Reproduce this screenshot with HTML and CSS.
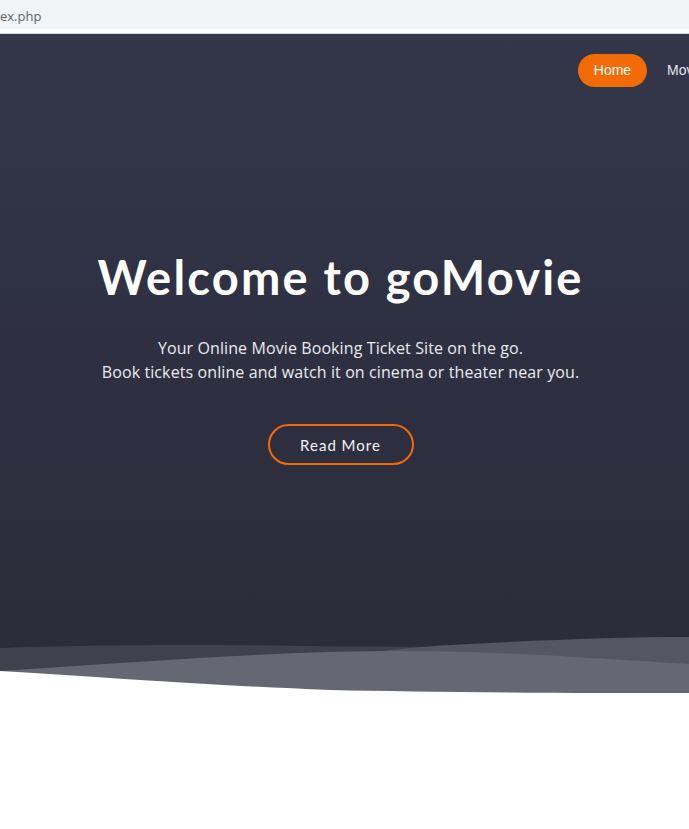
FILE: index.html
```html
<!DOCTYPE html>
<html>
<head>
<meta charset="utf-8">
<link rel="stylesheet" href="styles.css">
</head>
<body>
<div class="urlbar"><span class="url">ex.php</span></div>
<div class="gap"></div>
<section class="hero">
  <nav class="nav">
    <a class="nav-link active">Home</a>
    <a class="nav-link">Movies</a>
  </nav>
  <div class="hero-content">
    <h1 class="title">Welcome to goMovie</h1>
    <p class="subtitle">Your Online Movie Booking Ticket Site on the go.<br>Book tickets online and watch it on cinema or theater near you.</p>
    <a class="btn-outline">Read More</a>
  </div>
  <svg class="waves" viewBox="0 0 689 60" preserveAspectRatio="none" width="689" height="60">
    <path fill="#3f414d" d="M0,15 C80,12 200,11 300,13 C400,14 500,14 689,14 L689,60 L0,60 Z"/>
    <path fill="#545662" d="M300,30 C360,20 400,15 450,12 C540,7 620,4 689,4 L689,60 L300,60 Z"/>
    <path fill="#656873" d="M0,38 C150,28 280,18 400,18 C500,18 600,26 689,31 L689,60 L0,60 Z"/>
    <path fill="#ffffff" d="M0,38 C100,44 220,53 330,57 C420,59 550,60 689,60 L0,60 Z"/>
  </svg>
</section>
<div class="below"></div>
</body>
</html>
```
FILE: styles.css
```css
html, body {
  margin: 0;
  padding: 0;
  background: #ffffff;
  overflow: hidden;
}
.urlbar {
  height: 29px;
  background: #f1f3f4;
  display: flex;
  align-items: center;
}
.url {
  font-family: "Open Sans", "Noto Sans", sans-serif;
  font-size: 13px;
  color: #5f6368;
  margin-left: 0;
  margin-top: 2px;
}
.gap {
  height: 4px;
  background: #ffffff;
  border-bottom: 1px solid #d4d5d8;
}
.hero {
  position: relative;
  height: 659px;
  background: linear-gradient(180deg, #343649 0%, #2e3042 50%, #2a2c38 100%);
  overflow: hidden;
}
.nav {
  display: flex;
  justify-content: flex-start;
  gap: 20px;
  padding: 20px 0 0 578px;
  white-space: nowrap;
}
.nav-link {
  flex-shrink: 0;
  font-family: "Liberation Sans", Arial, sans-serif;
  font-size: 14px;
  color: #e6e6ec;
  height: 33px;
  line-height: 33px;
  display: block;
}
.nav-link.active {
  background: #f36b06;
  color: #ffffff;
  border-radius: 17px;
  width: 69px;
  text-align: center;
}
.hero-content {
  display: flex;
  flex-direction: column;
  align-items: center;
  padding: 162px 8px 0 0;
  color: #ffffff;
}
.title {
  font-family: "Lato", sans-serif;
  font-weight: 700;
  font-size: 47px;
  letter-spacing: 2.2px;
  line-height: 56px;
  margin: 0;
  color: #ffffff;
}
.subtitle {
  font-family: "Open Sans", "Noto Sans", sans-serif;
  font-size: 16px;
  line-height: 24px;
  letter-spacing: 0.1px;
  text-align: center;
  color: #ebebf0;
  margin: 31px 0 0 0;
}
.btn-outline {
  margin-top: 40px;
  width: 142px;
  height: 37px;
  border: 2px solid #f36b06;
  border-radius: 22px;
  display: flex;
  align-items: center;
  justify-content: center;
  font-family: "Lato", sans-serif;
  font-size: 15px;
  letter-spacing: 1px;
  color: #f2f2f5;
}
.waves {
  position: absolute;
  left: 0;
  bottom: 0;
  display: block;
}
.below {
  height: 136px;
  background: #ffffff;
}
```
